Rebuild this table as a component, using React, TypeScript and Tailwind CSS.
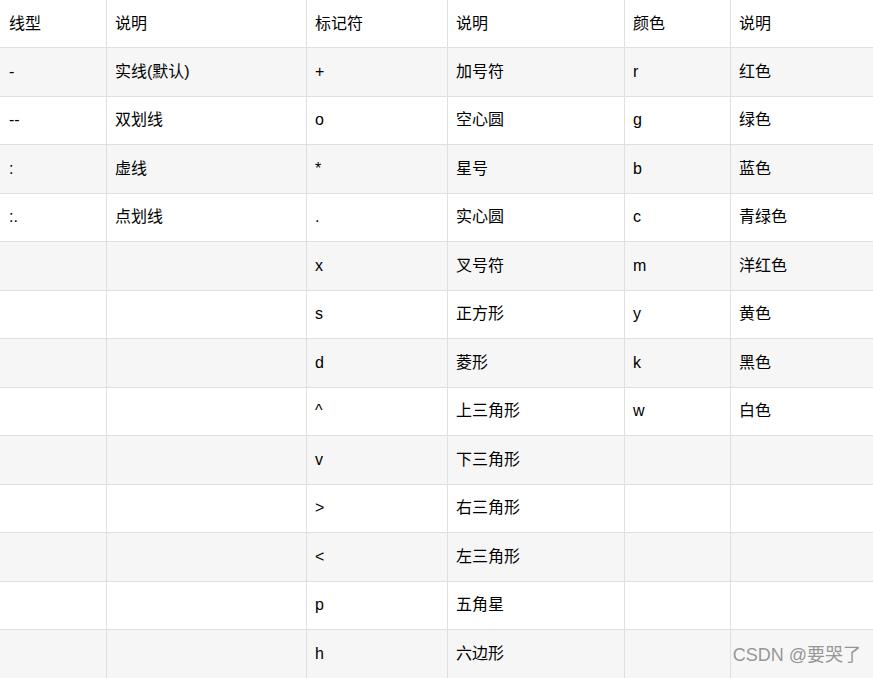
const header = ["线型", "说明", "标记符", "说明", "颜色", "说明"];

const rows: string[][] = [
  ["-", "实线(默认)", "+", "加号符", "r", "红色"],
  ["--", "双划线", "o", "空心圆", "g", "绿色"],
  [":", "虚线", "*", "星号", "b", "蓝色"],
  [":.", "点划线", ".", "实心圆", "c", "青绿色"],
  ["", "", "x", "叉号符", "m", "洋红色"],
  ["", "", "s", "正方形", "y", "黄色"],
  ["", "", "d", "菱形", "k", "黑色"],
  ["", "", "^", "上三角形", "w", "白色"],
  ["", "", "v", "下三角形", "", ""],
  ["", "", ">", "右三角形", "", ""],
  ["", "", "<", "左三角形", "", ""],
  ["", "", "p", "五角星", "", ""],
  ["", "", "h", "六边形", "", ""],
];

const cols = "grid grid-cols-[107px_200px_141px_177px_106px_142px]";

function Row({ cells, striped, header }: { cells: string[]; striped?: boolean; header?: boolean }) {
  return (
    <div className={`${cols} ${header ? "h-[48px]" : "h-[48.5px]"} ${striped ? "bg-[#f6f6f6]" : "bg-white"}`}>
      {cells.map((c, i) => (
        <div
          key={i}
          className={`flex items-center border-b border-[#dfdfdf] ${i === 0 ? "pl-[9px]" : "pl-[8px]"} ${i < 5 ? "border-r" : ""}`}
        >
          {c}
        </div>
      ))}
    </div>
  );
}

export default function App() {
  return (
    <div
      className="relative h-[678px] w-[873px] overflow-hidden bg-white text-[16px] text-black"
      style={{ fontFamily: '"Liberation Sans", "Noto Sans CJK SC", sans-serif' }}
    >
      <Row cells={header} header />
      {rows.map((r, i) => (
        <Row key={i} cells={r} striped={i % 2 === 0} />
      ))}
      <div className="absolute right-[12px] top-[646px] text-[18px] leading-none text-[#8a8a8a]/90">
        CSDN @要哭了
      </div>
    </div>
  );
}
